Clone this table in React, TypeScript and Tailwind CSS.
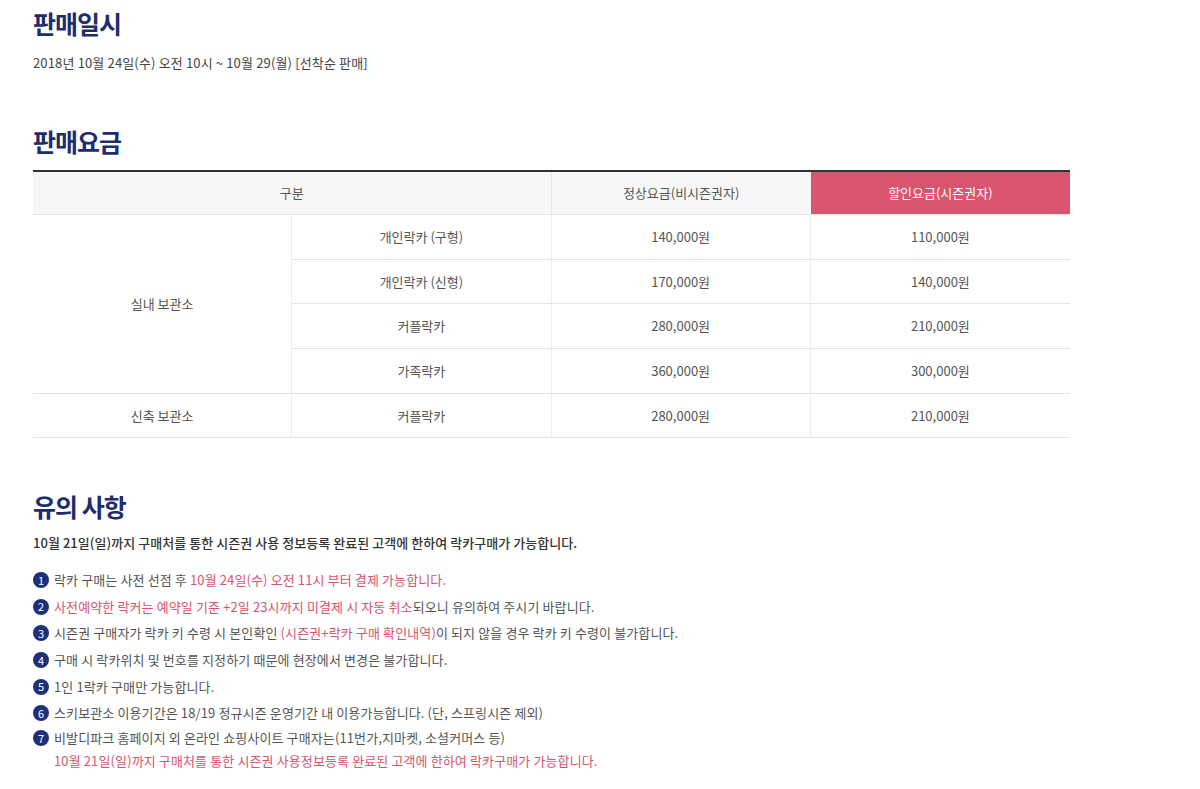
import React from "react";

const font = { fontFamily: '"Noto Sans CJK KR", "Noto Sans", sans-serif' };

const rows = [
  { name: "개인락카 (구형)", normal: "140,000원", sale: "110,000원" },
  { name: "개인락카 (신형)", normal: "170,000원", sale: "140,000원" },
  { name: "커플락카", normal: "280,000원", sale: "210,000원" },
  { name: "가족락카", normal: "360,000원", sale: "300,000원" },
];

function Num({ n }: { n: number }) {
  return (
    <span className="inline-flex w-[16px] h-[16px] rounded-full bg-[#1f2f7a] text-white text-[11px] leading-none items-center justify-center mr-[5px] shrink-0 tracking-normal">
      {n}
    </span>
  );
}

export default function App() {
  return (
    <div className="bg-white w-[1200px] h-[789px] overflow-hidden text-[#444]" style={font}>
      <div className="ml-[33px] w-[1037px]">
        <h2 className="text-[25px] font-bold text-[#1e2d6b] tracking-[-1px] leading-none pt-[11px]">판매일시</h2>
        <p className="text-[13px] text-[#444] tracking-[0.15px] mt-[17px] leading-[20px]">
          2018년 10월 24일(수) 오전 10시 ~ 10월 29(월) [선착순 판매]
        </p>

        <h2 className="text-[25px] font-bold text-[#1e2d6b] tracking-[-1px] leading-none mt-[56px]">판매요금</h2>

        <div className="mt-[16px] border-t-2 border-[#333] text-[13px] text-[#555] tracking-[0px]">
          <div className="grid grid-cols-4 h-[43px] bg-[#f7f7f7] border-b border-[#e3e3e3]">
            <div className="col-span-2 flex items-center justify-center border-r border-[#e8e8e8]">구분</div>
            <div className="flex items-center justify-center">정상요금(비시즌권자)</div>
            <div className="flex items-center justify-center bg-[#d9546e] text-white">할인요금(시즌권자)</div>
          </div>
          <div className="grid grid-cols-4 border-b border-[#e3e3e3]">
            <div className="row-span-4 flex items-center justify-center border-r border-[#ececec]">실내 보관소</div>
            {rows.map((r, i) => (
              <React.Fragment key={i}>
                <div className={`h-[44.5px] flex items-center justify-center border-r border-[#ececec] ${i < 3 ? "border-b border-b-[#e3e3e3]" : ""}`}>{r.name}</div>
                <div className={`h-[44.5px] flex items-center justify-center border-r border-[#ececec] ${i < 3 ? "border-b border-b-[#e3e3e3]" : ""}`}>{r.normal}</div>
                <div className={`h-[44.5px] flex items-center justify-center ${i < 3 ? "border-b border-b-[#e3e3e3]" : ""}`}>{r.sale}</div>
              </React.Fragment>
            ))}
          </div>
          <div className="grid grid-cols-4 h-[44px] border-b border-[#e3e3e3]">
            <div className="flex items-center justify-center border-r border-[#ececec]">신축 보관소</div>
            <div className="flex items-center justify-center border-r border-[#ececec]">커플락카</div>
            <div className="flex items-center justify-center border-r border-[#ececec]">280,000원</div>
            <div className="flex items-center justify-center">210,000원</div>
          </div>
        </div>

        <h2 className="text-[25px] font-bold text-[#1e2d6b] tracking-[-1px] leading-none mt-[56px]">유의 사항</h2>
        <p className="text-[13px] font-medium text-[#333] tracking-[0.05px] mt-[14px] leading-[20px]">
          10월 21일(일)까지 구매처를 통한 시즌권 사용 정보등록 완료된 고객에 한하여 락카구매가 가능합니다.
        </p>

        <ul className="mt-[17px] text-[13px] text-[#555] tracking-[0.12px] leading-[20px] flex flex-col gap-[6.7px]">
          <li className="flex items-center">
            <Num n={1} />
            <span>락카 구매는 사전 선점 후 <span className="text-[#d9546e]">10월 24일(수) 오전 11시 부터 결제 가능합니다.</span></span>
          </li>
          <li className="flex items-center">
            <Num n={2} />
            <span><span className="text-[#d9546e]">사전예약한 락커는 예약일 기준 +2일 23시까지 미결제 시 자동 취소</span>되오니 유의하여 주시기 바랍니다.</span>
          </li>
          <li className="flex items-center">
            <Num n={3} />
            <span>시즌권 구매자가 락카 키 수령 시 본인확인 <span className="text-[#d9546e]">(시즌권+락카 구매 확인내역)</span>이 되지 않을 경우 락카 키 수령이 불가합니다.</span>
          </li>
          <li className="flex items-center">
            <Num n={4} />
            <span>구매 시 락카위치 및 번호를 지정하기 때문에 현장에서 변경은 불가합니다.</span>
          </li>
          <li className="flex items-center">
            <Num n={5} />
            <span>1인 1락카 구매만 가능합니다.</span>
          </li>
          <li className="flex items-center">
            <Num n={6} />
            <span>스키보관소 이용기간은 18/19 정규시즌 운영기간 내 이용가능합니다. (단, 스프링시즌 제외)</span>
          </li>
          <li className="flex items-start">
            <Num n={7} />
            <span className="flex flex-col gap-[3px] -mt-[2px]">
              <span>비발디파크 홈페이지 외 온라인 쇼핑사이트 구매자는(11번가,지마켓, 소셜커머스 등)</span>
              <span className="text-[#d9546e]">10월 21일(일)까지 구매처를 통한 시즌권 사용정보등록 완료된 고객에 한하여 락카구매가 가능합니다.</span>
            </span>
          </li>
        </ul>
      </div>
    </div>
  );
}
